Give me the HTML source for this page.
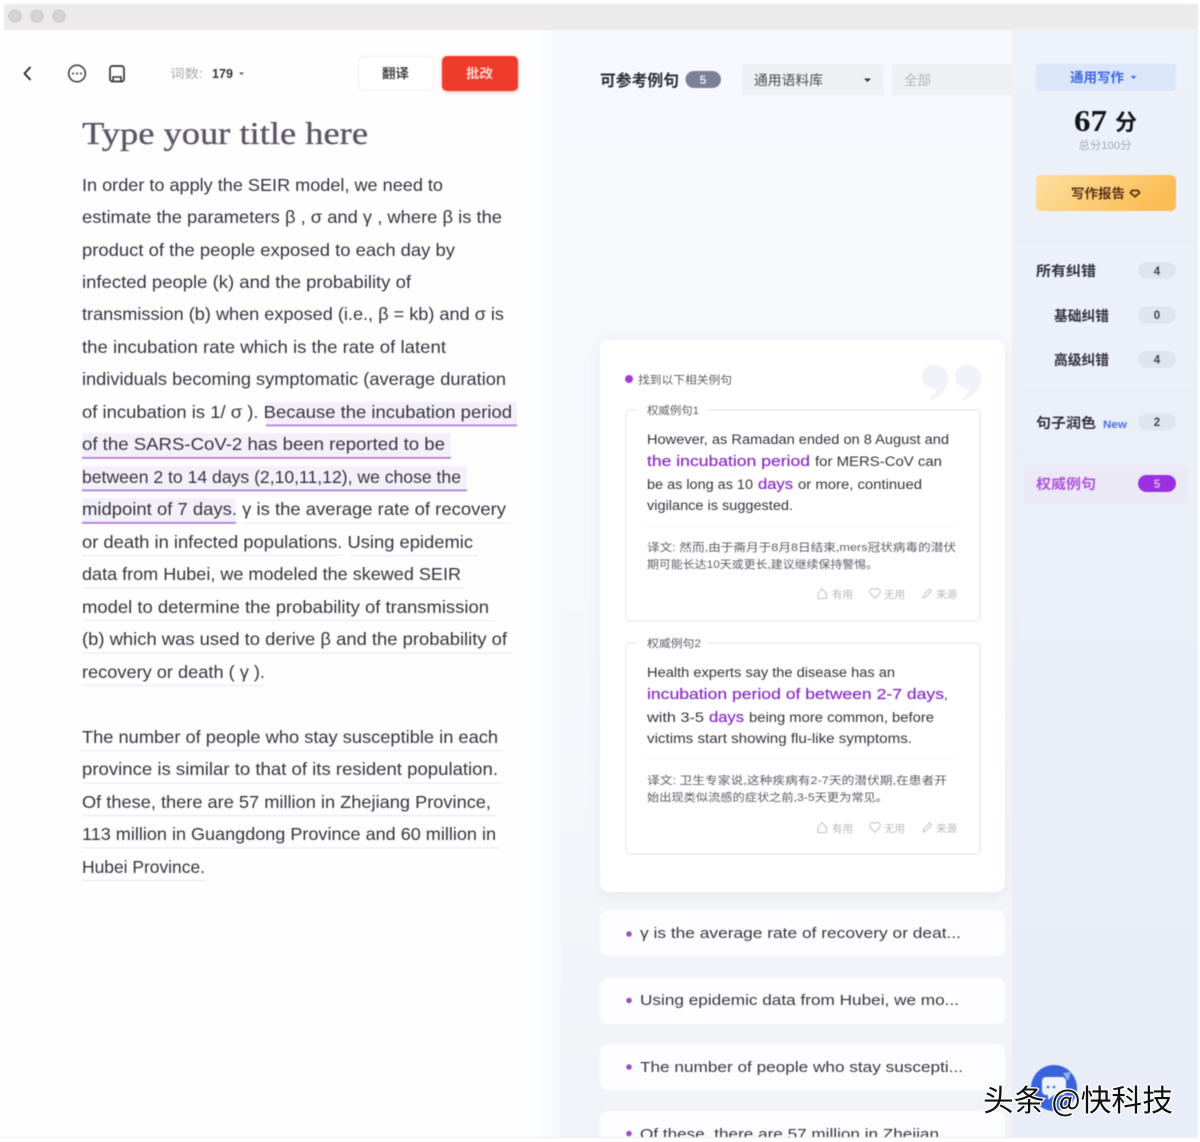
<!DOCTYPE html>
<html><head><meta charset="utf-8">
<style>
html,body{margin:0;padding:0;background:#fff;width:1200px;height:1142px;overflow:hidden}
svg{display:block}
text{font-family:"Liberation Sans","Noto Sans CJK SC",sans-serif;white-space:pre}
.b{font-size:17.5px;fill:#34343e}
.e{font-size:13.5px;fill:#34343e}
.p{font-size:15px;fill:#8a2cc4;font-weight:500;stroke:#8a2cc4;stroke-width:.2px}
.c{font-size:11px;fill:#5c5c66}
.a{font-size:10.5px;fill:#b6b8c0}
.l{font-size:15px;fill:#36363f}
.s{font-size:14px;font-weight:bold;fill:#33333c}
.n{font-size:11.5px;font-weight:bold;fill:#444;text-anchor:middle}
.ic{fill:none;stroke:#c0c2c9;stroke-width:1}
</style></head><body>
<svg width="1200" height="1142" viewBox="0 0 1200 1142" xmlns="http://www.w3.org/2000/svg">
<defs>
<linearGradient id="mid" x1="0" y1="0" x2="0" y2="1"><stop offset="0" stop-color="#f6f8fd"/><stop offset=".5" stop-color="#f6f8fc"/><stop offset="1" stop-color="#f1f3f8"/></linearGradient>
<linearGradient id="rt" x1="0" y1="0" x2="0" y2="1"><stop offset="0" stop-color="#edf1f9"/><stop offset="1" stop-color="#e9edf8"/></linearGradient>
<linearGradient id="gold" x1="0" y1="0" x2="1" y2="0.3"><stop offset="0" stop-color="#fde0a2"/><stop offset="1" stop-color="#fbbd55"/></linearGradient>
<linearGradient id="fade" x1="0" y1="0" x2="1" y2="0"><stop offset="0" stop-color="#fff"/><stop offset="1" stop-color="#f6f8fd"/></linearGradient>
<filter id="sh" x="-10%" y="-10%" width="120%" height="120%"><feDropShadow dx="0" dy="3" stdDeviation="7" flood-color="#a9b2c8" flood-opacity=".22"/></filter>
<filter id="rs" x="-20%" y="-20%" width="140%" height="140%"><feDropShadow dx="0" dy="1" stdDeviation="2" flood-color="#ee3a2b" flood-opacity=".35"/></filter>
</defs>

<g style="filter:blur(.4px)">
<!-- panels -->
<rect x="4" y="30" width="1194" height="1108" fill="#fefeff"/>
<rect x="530" y="30" width="30" height="1108" fill="url(#fade)"/>
<rect x="560" y="30" width="453" height="1108" fill="url(#mid)"/>
<rect x="1012" y="30" width="186" height="1108" fill="url(#rt)"/>
<rect x="4" y="4" width="1194" height="26" fill="#eceaea"/>
<circle cx="15" cy="16" r="6" fill="#d5d3d3" stroke="#c4c2c2"/>
<circle cx="37" cy="16" r="6" fill="#d5d3d3" stroke="#c4c2c2"/>
<circle cx="59" cy="16" r="6" fill="#d5d3d3" stroke="#c4c2c2"/>

<!-- toolbar -->
<path d="M30.500 67 L24.500 73.500 L30.500 80" fill="none" stroke="#222" stroke-width="1.800"/>
<circle cx="77" cy="73.500" r="8.300" fill="none" stroke="#333" stroke-width="1.500"/>
<circle cx="73" cy="73.500" r="1" fill="#333"/><circle cx="77" cy="73.500" r="1" fill="#333"/><circle cx="81" cy="73.500" r="1" fill="#333"/>
<rect x="110" y="66" width="14" height="15.500" rx="2.500" fill="none" stroke="#333" stroke-width="1.700"/>
<path d="M113 81 v-4 h8 v4" fill="none" stroke="#333" stroke-width="1.500"/>
<text x="170" y="78" font-size="12.500" fill="#a9a9b0" textLength="33" lengthAdjust="spacingAndGlyphs">词数:</text>
<text x="212" y="78" font-size="12.500" font-weight="bold" fill="#333" textLength="21" lengthAdjust="spacingAndGlyphs">179</text>
<path d="M239 72.500 h5 l-2.500 2.500z" fill="#555"/>
<rect x="358.500" y="56.500" width="75" height="34" rx="5" fill="#fff" stroke="#eeeff3"/>
<text x="382" y="78" font-size="13" font-weight="bold" fill="#444" textLength="27" lengthAdjust="spacingAndGlyphs">翻译</text>
<rect x="442" y="56" width="76" height="35" rx="5" fill="#ee3a2b" filter="url(#rs)"/>
<text x="466" y="78" font-size="13" font-weight="bold" fill="#fbd5cf" textLength="27" lengthAdjust="spacingAndGlyphs">批改</text>

<!-- title -->
<text x="82" y="144" font-size="32" fill="#5d5666" stroke="#5d5666" stroke-width=".35" style="font-family:'Liberation Serif','Noto Serif CJK SC',serif" textLength="286" lengthAdjust="spacingAndGlyphs">Type your title here</text>

<!-- highlights -->
<g fill="#f4f0fb">
<rect x="266" y="402" width="251" height="23"/>
<rect x="82" y="433" width="369" height="25"/>
<rect x="82" y="466" width="385" height="24"/>
<rect x="82" y="498" width="154" height="25"/>
</g>
<g fill="#b57fd6">
<rect x="266" y="424.500" width="251" height="1.800"/>
<rect x="82" y="457" width="369" height="1.800"/>
<rect x="82" y="489.500" width="385" height="1.800"/>
<rect x="82" y="522" width="154" height="1.800"/>
</g>
<g fill="#e6e7ec">
<rect x="244" y="522.500" width="266" height="1"/>
<rect x="82" y="555" width="261" height="1"/>
<rect x="350" y="555" width="128" height="1"/>
<rect x="83" y="587.500" width="382" height="1"/>
<rect x="83" y="620" width="412" height="1"/>
<rect x="83" y="652.500" width="430" height="1"/>
<rect x="83" y="685" width="182" height="1"/>
<rect x="82" y="750" width="421" height="1"/>
<rect x="82" y="782.500" width="421" height="1"/>
<rect x="82" y="815" width="415" height="1"/>
<rect x="82" y="847.500" width="419" height="1"/>
<rect x="82" y="880" width="125" height="1"/>
</g>

<!-- body -->
<text class="b" x="82" y="191" textLength="361" lengthAdjust="spacingAndGlyphs">In order to apply the SEIR model, we need to</text>
<text class="b" x="82" y="223" textLength="420" lengthAdjust="spacingAndGlyphs">estimate the parameters β , σ and γ , where β is the</text>
<text class="b" x="82" y="256" textLength="373" lengthAdjust="spacingAndGlyphs">product of the people exposed to each day by</text>
<text class="b" x="82" y="288" textLength="329" lengthAdjust="spacingAndGlyphs">infected people (k) and the probability of</text>
<text class="b" x="82" y="320" textLength="422" lengthAdjust="spacingAndGlyphs">transmission (b) when exposed (i.e., β = kb) and σ is</text>
<text class="b" x="82" y="353" textLength="364" lengthAdjust="spacingAndGlyphs">the incubation rate which is the rate of latent</text>
<text class="b" x="82" y="385" textLength="424" lengthAdjust="spacingAndGlyphs">individuals becoming symptomatic (average duration</text>
<text class="b" x="82" y="418" textLength="430" lengthAdjust="spacingAndGlyphs">of incubation is 1/ σ ). Because the incubation period</text>
<text class="b" x="82" y="450" textLength="363" lengthAdjust="spacingAndGlyphs">of the SARS-CoV-2 has been reported to be</text>
<text class="b" x="82" y="483" textLength="379" lengthAdjust="spacingAndGlyphs">between 2 to 14 days (2,10,11,12), we chose the</text>
<text class="b" x="82" y="515" textLength="424" lengthAdjust="spacingAndGlyphs">midpoint of 7 days. γ is the average rate of recovery</text>
<text class="b" x="82" y="548" textLength="391" lengthAdjust="spacingAndGlyphs">or death in infected populations. Using epidemic</text>
<text class="b" x="82" y="580" textLength="379" lengthAdjust="spacingAndGlyphs">data from Hubei, we modeled the skewed SEIR</text>
<text class="b" x="82" y="613" textLength="407" lengthAdjust="spacingAndGlyphs">model to determine the probability of transmission</text>
<text class="b" x="82" y="645" textLength="425" lengthAdjust="spacingAndGlyphs">(b) which was used to derive β and the probability of</text>
<text class="b" x="82" y="678" textLength="183" lengthAdjust="spacingAndGlyphs">recovery or death ( γ ).</text>
<text class="b" x="82" y="743" textLength="416" lengthAdjust="spacingAndGlyphs">The number of people who stay susceptible in each</text>
<text class="b" x="82" y="775" textLength="416" lengthAdjust="spacingAndGlyphs">province is similar to that of its resident population.</text>
<text class="b" x="82" y="808" textLength="409" lengthAdjust="spacingAndGlyphs">Of these, there are 57 million in Zhejiang Province,</text>
<text class="b" x="82" y="840" textLength="414" lengthAdjust="spacingAndGlyphs">113 million in Guangdong Province and 60 million in</text>
<text class="b" x="82" y="873" textLength="123" lengthAdjust="spacingAndGlyphs">Hubei Province.</text>

<!-- middle header -->
<text x="600" y="86" font-size="16" font-weight="bold" fill="#2c2c34" textLength="79" lengthAdjust="spacingAndGlyphs">可参考例句</text>
<rect x="685.500" y="71" width="35.500" height="17" rx="8.500" fill="#7b8097"/>
<text x="703" y="84" font-size="12" font-weight="bold" fill="#e4e6ee" text-anchor="middle">5</text>
<rect x="742" y="64" width="141.500" height="31" rx="3" fill="#eef0f4"/>
<text x="754" y="85" font-size="13.500" fill="#4a4a54" textLength="69" lengthAdjust="spacingAndGlyphs">通用语料库</text>
<path d="M864 78.500 h7 l-3.500 3.500z" fill="#333"/>
<path d="M892 67 a3 3 0 0 1 3 -3 H1012 V95 H895 a3 3 0 0 1 -3 -3z" fill="#eef0f4"/>
<text x="904" y="85" font-size="13.500" fill="#b2b4ba" textLength="27" lengthAdjust="spacingAndGlyphs">全部</text>

<!-- right panel -->
<rect x="1036" y="64" width="140" height="27" rx="4" fill="#dbe6fb"/>
<text x="1070" y="82" font-size="13" font-weight="bold" fill="#3f66e0" textLength="54" lengthAdjust="spacingAndGlyphs">通用写作</text>
<path d="M1130.500 76 h6 l-3 3z" fill="#3f66e0"/>
<text x="1074" y="131" font-size="31" font-weight="bold" fill="#15151c" style="font-family:'Liberation Serif',serif" textLength="33" lengthAdjust="spacingAndGlyphs">67</text>
<text x="1115" y="130" font-size="22" font-weight="bold" fill="#15151c" style="font-family:'Noto Sans CJK SC',sans-serif">分</text>
<text x="1105" y="149" font-size="11" fill="#a5a8b2" text-anchor="middle" textLength="53" lengthAdjust="spacingAndGlyphs">总分100分</text>
<rect x="1036" y="175" width="140" height="36" rx="5" fill="url(#gold)"/>
<text x="1071" y="198" font-size="13" font-weight="bold" fill="#5a3414" textLength="54" lengthAdjust="spacingAndGlyphs">写作报告</text>
<path d="M1132 190.500 h6 l1.500 2.300 -4.500 3.900 -4.500 -3.900z" fill="none" stroke="#5a3414" stroke-width="1.800"/>
<g fill="#e8ebf3">
<rect x="1014" y="241" width="184" height="1"/>
<rect x="1014" y="391" width="184" height="1"/>
<rect x="1014" y="453" width="184" height="1"/>
</g>
<text class="s" x="1036" y="276" textLength="60" lengthAdjust="spacingAndGlyphs">所有纠错</text>
<rect x="1138" y="262" width="38" height="17" rx="8.500" fill="#dfe4ee"/><text class="n" x="1157" y="275">4</text>
<text class="s" x="1054" y="321" textLength="55" lengthAdjust="spacingAndGlyphs">基础纠错</text>
<rect x="1138" y="306.500" width="38" height="17" rx="8.500" fill="#dfe4ee"/><text class="n" x="1157" y="319">0</text>
<text class="s" x="1054" y="365" textLength="55" lengthAdjust="spacingAndGlyphs">高级纠错</text>
<rect x="1138" y="351" width="38" height="17" rx="8.500" fill="#dfe4ee"/><text class="n" x="1157" y="363.500">4</text>
<text class="s" x="1036" y="428" textLength="60" lengthAdjust="spacingAndGlyphs">句子润色</text>
<text x="1103" y="428" font-size="11" font-weight="bold" fill="#4a6fe0" textLength="24" lengthAdjust="spacingAndGlyphs">New</text>
<rect x="1138" y="413.500" width="38" height="17" rx="8.500" fill="#dfe4ee"/><text class="n" x="1157" y="426">2</text>
<rect x="1024" y="465" width="164" height="39" rx="5" fill="#ebe9f6"/>
<text x="1036" y="489" font-size="14" font-weight="bold" fill="#b255dc" textLength="60" lengthAdjust="spacingAndGlyphs">权威例句</text>
<rect x="1138" y="475" width="38" height="17" rx="8.500" fill="#9a30e2"/><text x="1157" y="488" font-size="11.500" font-weight="bold" fill="#dcb6f4" text-anchor="middle">5</text>

<!-- main card -->
<rect x="600" y="340" width="405" height="552" rx="9" fill="#fff" filter="url(#sh)"/>
<circle cx="629" cy="379" r="4" fill="#a13fd8"/>
<text class="c" x="638" y="383.500" textLength="94" lengthAdjust="spacingAndGlyphs">找到以下相关例句</text>
<g fill="#f0f2f8">
<path d="M934 365 c9 0 14 6 14 13 c0 11 -8 18 -17 22 l-1.500 -1.500 c4 -3 6.500 -6 7.500 -10 c-8 1 -15 -4 -15 -11.500 c0 -7 5 -12 12 -12z"/>
<path d="M967 365 c9 0 14 6 14 13 c0 11 -8 18 -17 22 l-1.500 -1.500 c4 -3 6.500 -6 7.500 -10 c-8 1 -15 -4 -15 -11.500 c0 -7 5 -12 12 -12z"/>
</g>

<!-- box 1 -->
<rect x="626" y="410" width="354" height="211" rx="4" fill="#fff" stroke="#dfe3ea"/>
<rect x="636" y="405" width="72" height="10" fill="#fff"/>
<text class="c" x="647" y="414" textLength="52" lengthAdjust="spacingAndGlyphs">权威例句1</text>
<text class="e" x="647" y="444" textLength="302" lengthAdjust="spacingAndGlyphs">However, as Ramadan ended on 8 August and</text>
<text class="p" x="647" y="466" textLength="163" lengthAdjust="spacingAndGlyphs">the incubation period</text>
<text class="e" x="815" y="466" textLength="127" lengthAdjust="spacingAndGlyphs">for MERS-CoV can</text>
<text class="e" x="647" y="489" textLength="106" lengthAdjust="spacingAndGlyphs">be as long as 10</text>
<text class="p" x="758" y="489" textLength="35" lengthAdjust="spacingAndGlyphs">days</text>
<text class="e" x="798" y="489" textLength="124" lengthAdjust="spacingAndGlyphs">or more, continued</text>
<text class="e" x="647" y="510" textLength="146" lengthAdjust="spacingAndGlyphs">vigilance is suggested.</text>
<path d="M647 527 H958" stroke="#eceef2" stroke-dasharray="2 2"/>
<text class="c" x="647" y="551" textLength="309" lengthAdjust="spacingAndGlyphs">译文: 然而,由于斋月于8月8日结束,mers冠状病毒的潜伏</text>
<text class="c" x="647" y="568" textLength="231" lengthAdjust="spacingAndGlyphs">期可能长达10天或更长,建议继续保持警惕。</text>
<path class="ic" d="M818 598.500 v-5 l4 -5 3.500 4 v1 h1 v5z"/>
<text class="a" x="832" y="598" textLength="21" lengthAdjust="spacingAndGlyphs">有用</text>
<path class="ic" d="M875 598.500 l-4.500 -5 a3 3 0 0 1 4.500 -4 a3 3 0 0 1 4.500 4z"/>
<text class="a" x="884" y="598" textLength="21" lengthAdjust="spacingAndGlyphs">无用</text>
<path class="ic" d="M923 598 l1 -3 5.500 -6 2 2 -5.500 6z"/>
<text class="a" x="936" y="598" textLength="21" lengthAdjust="spacingAndGlyphs">来源</text>

<!-- box 2 -->
<rect x="626" y="643" width="354" height="211" rx="4" fill="#fff" stroke="#dfe3ea"/>
<rect x="636" y="638" width="72" height="10" fill="#fff"/>
<text class="c" x="647" y="647" textLength="54" lengthAdjust="spacingAndGlyphs">权威例句2</text>
<text class="e" x="647" y="677" textLength="248" lengthAdjust="spacingAndGlyphs">Health experts say the disease has an</text>
<text class="p" x="647" y="699" textLength="297" lengthAdjust="spacingAndGlyphs">incubation period of between 2-7 days</text>
<text class="e" x="944" y="699">,</text>
<text class="e" x="647" y="722" textLength="57" lengthAdjust="spacingAndGlyphs">with 3-5</text>
<text class="p" x="709" y="722" textLength="35" lengthAdjust="spacingAndGlyphs">days</text>
<text class="e" x="749" y="722" textLength="185" lengthAdjust="spacingAndGlyphs">being more common, before</text>
<text class="e" x="647" y="743" textLength="265" lengthAdjust="spacingAndGlyphs">victims start showing flu-like symptoms.</text>
<path d="M647 759 H958" stroke="#eceef2" stroke-dasharray="2 2"/>
<text class="c" x="647" y="784" textLength="300" lengthAdjust="spacingAndGlyphs">译文: 卫生专家说,这种疾病有2-7天的潜伏期,在患者开</text>
<text class="c" x="647" y="801" textLength="241" lengthAdjust="spacingAndGlyphs">始出现类似流感的症状之前,3-5天更为常见。</text>
<path class="ic" d="M818 832.500 v-5 l4 -5 3.500 4 v1 h1 v5z"/>
<text class="a" x="832" y="832" textLength="21" lengthAdjust="spacingAndGlyphs">有用</text>
<path class="ic" d="M875 832.500 l-4.500 -5 a3 3 0 0 1 4.500 -4 a3 3 0 0 1 4.500 4z"/>
<text class="a" x="884" y="832" textLength="21" lengthAdjust="spacingAndGlyphs">无用</text>
<path class="ic" d="M923 832 l1 -3 5.500 -6 2 2 -5.500 6z"/>
<text class="a" x="936" y="832" textLength="21" lengthAdjust="spacingAndGlyphs">来源</text>

<!-- list cards -->
<g fill="#fdfdff">
<rect x="600" y="910" width="405" height="46" rx="8"/>
<rect x="600" y="978" width="405" height="46" rx="8"/>
<rect x="600" y="1044" width="405" height="46" rx="8"/>
<rect x="600" y="1111" width="405" height="46" rx="8"/>
</g>
<g fill="#9a4fc0">
<circle cx="629" cy="934" r="2.800"/><circle cx="629" cy="1000.500" r="2.800"/><circle cx="629" cy="1067" r="2.800"/><circle cx="629" cy="1133.500" r="2.800"/>
</g>
<text class="l" x="640" y="938" textLength="321" lengthAdjust="spacingAndGlyphs">γ is the average rate of recovery or deat...</text>
<text class="l" x="640" y="1005" textLength="319" lengthAdjust="spacingAndGlyphs">Using epidemic data from Hubei, we mo...</text>
<text class="l" x="640" y="1072" textLength="323" lengthAdjust="spacingAndGlyphs">The number of people who stay suscepti...</text>
<text class="l" x="640" y="1139" textLength="299" lengthAdjust="spacingAndGlyphs">Of these, there are 57 million in Zhejian</text>

<!-- bottom edge -->
<rect x="0" y="1138" width="1200" height="4" fill="#fff"/>
<rect x="0" y="1137" width="1200" height="1" fill="#eceef3"/>
<rect x="1198" y="0" width="2" height="1142" fill="#fff"/>

<!-- floating button -->
<circle cx="1054" cy="1088" r="23" fill="#3a63d9"/>
<path d="M1063 1073 l8 -1 -3 9z" fill="#8fb0f5"/>
<path d="M1046 1077 h16 a4 4 0 0 1 4 4 v10 a4 4 0 0 1 -4 4 h-8 l-6 5 v-5 h-2 a4 4 0 0 1 -4 -4 v-10 a4 4 0 0 1 4 -4z" fill="#eef3fe"/>
<circle cx="1048" cy="1087" r="1.300" fill="#3a63d9"/><circle cx="1054" cy="1087" r="1.300" fill="#3a63d9"/>
</g>

<!-- watermark -->
<text x="983" y="1111" font-size="30" fill="#111" stroke="#fff" stroke-width="2.500" paint-order="stroke" style="font-family:'Noto Sans CJK SC',sans-serif" textLength="190" lengthAdjust="spacingAndGlyphs">头条 @快科技</text>
</svg>
</body></html>
